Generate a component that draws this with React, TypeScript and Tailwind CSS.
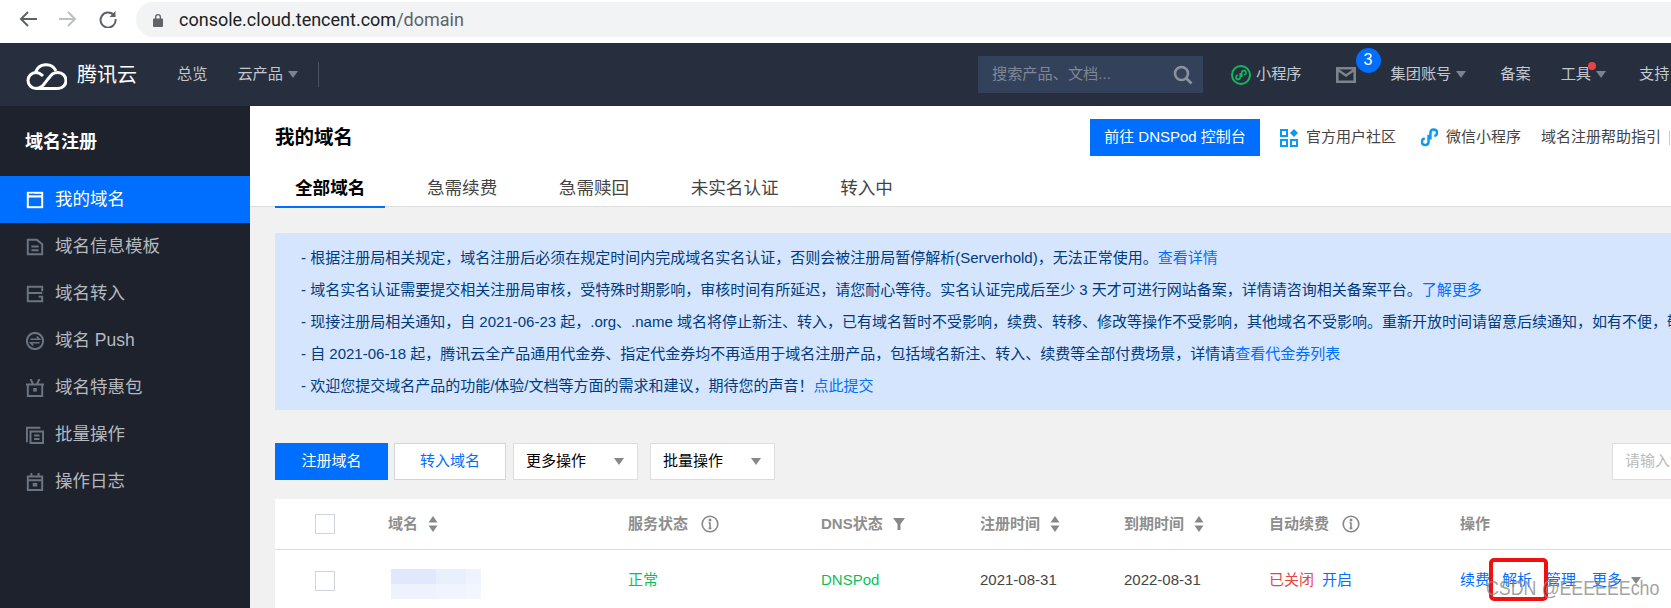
const Caret = ({ className = "border-t-[#8f96a0]" }: { className?: string }) => (
  <span className={`inline-block w-0 h-0 border-x-[5px] border-x-transparent border-t-[7px] ${className}`} />
);

const Sort = () => (
  <svg viewBox="0 0 10 16" className="w-[10px] h-[16px] ml-[10px]" fill="#888">
    <path d="M5 0l4.500 6.500h-9zM5 16l4.500-6.500h-9z" />
  </svg>
);

const Info = () => (
  <svg viewBox="0 0 18 18" className="w-[18px] h-[18px] ml-[13px]" fill="none" stroke="#888" strokeWidth="1.600">
    <circle cx="9" cy="9" r="7.800" />
    <path d="M9 7.500v6M7.600 7.800H9M7.600 13.400h2.800" />
    <circle cx="9" cy="5" r="0.700" fill="#888" />
  </svg>
);

const sideIcons = [
  <>
    <rect x="2" y="2" width="16" height="16" />
    <path d="M2 6h16" strokeWidth="2.500" />
    <path d="M4 3.500h1.500M7 3.500h1.500" stroke="#006eff" strokeWidth="1.200" />
  </>,
  <path d="M2 2h10l6 5v11H2zM6 9.500h8M6 13.500h8" />,
  <path d="M18 7V2H2v16h16v-5h-4M2 9h16" />,
  <>
    <circle cx="10" cy="10" r="9" />
    <path d="M5 8h10l-3-3M15 12H5l3 3" strokeWidth="1.700" />
  </>,
  <>
    <path d="M2 6h16v13H2zM0 6h20M5 0l3 6M15 0l-3 6" />
    <rect x="8" y="10" width="4" height="4" fill="currentColor" stroke="none" />
  </>,
  <path d="M1 18V2h15M5 6h14v13H5zM9 10.500h6M9 14.500h6" />,
  <>
    <path d="M2 4h16v15H2zM6 0v5M14 0v5M2 8h16" />
    <rect x="7.500" y="11" width="5" height="4" fill="currentColor" stroke="none" />
  </>,
];

const sideItems = ["我的域名", "域名信息模板", "域名转入", "域名 Push", "域名特惠包", "批量操作", "操作日志"];

const notices = [
  { text: "- 根据注册局相关规定，域名注册后必须在规定时间内完成域名实名认证，否则会被注册局暂停解析(Serverhold)，无法正常使用。", link: "查看详情" },
  { text: "- 域名实名认证需要提交相关注册局审核，受特殊时期影响，审核时间有所延迟，请您耐心等待。实名认证完成后至少 3 天才可进行网站备案，详情请咨询相关备案平台。", link: "了解更多" },
  { text: "- 现接注册局相关通知，自 2021-06-23 起，.org、.name 域名将停止新注、转入，已有域名暂时不受影响，续费、转移、修改等操作不受影响，其他域名不受影响。重新开放时间请留意后续通知，如有不便，敬请谅解。", link: "" },
  { text: "- 自 2021-06-18 起，腾讯云全产品通用代金券、指定代金券均不再适用于域名注册产品，包括域名新注、转入、续费等全部付费场景，详情请", link: "查看代金券列表" },
  { text: "- 欢迎您提交域名产品的功能/体验/文档等方面的需求和建议，期待您的声音！", link: "点此提交" },
];

const tabs = ["全部域名", "急需续费", "急需赎回", "未实名认证", "转入中"];

export default function App() {
  return (
    <div className="w-[1671px] h-[608px] overflow-hidden relative bg-[#f1f1f1] font-['Liberation_Sans','Noto_Sans_CJK_SC',sans-serif]">
      {/* Browser bar */}
      <div className="h-[43px] bg-white flex items-start">
        <div className="h-[37px] flex items-center shrink-0">
          <svg viewBox="0 0 18 18" className="w-[18px] h-[18px] ml-[19px]" fill="none" stroke="#5f6368" strokeWidth="2">
            <path d="M18 9H2M9 2L2 9l7 7" />
          </svg>
          <svg viewBox="0 0 18 18" className="w-[18px] h-[18px] ml-[22px]" fill="none" stroke="#bcbfc3" strokeWidth="2">
            <path d="M0 9h16M9 2l7 7-7 7" />
          </svg>
          <svg viewBox="0 0 18 18" className="w-[18px] h-[18px] ml-[22px]" fill="none" stroke="#5f6368" strokeWidth="2">
            <path d="M15 5.500A7.500 7.500 0 1016.500 9" />
            <path d="M16.500 1v6h-6z" fill="#5f6368" stroke="none" />
          </svg>
        </div>
        <div className="ml-[19px] mt-[2px] h-[35px] flex-1 rounded-l-full bg-[#f1f3f4] flex items-center pl-[17px]">
          <svg viewBox="0 0 10 14" className="w-[10px] h-[14px]" fill="#5f6368">
            <path d="M1 5.500h1V4a3 3 0 016 0v1.500h1a1 1 0 011 1V13a1 1 0 01-1 1H1a1 1 0 01-1-1V6.500a1 1 0 011-1zM3.300 5.500h3.400V4a1.700 1.700 0 00-3.400 0z" />
          </svg>
          <span className="ml-[16px] text-[18px] leading-none font-['Roboto',sans-serif] text-[#202124]">
            console.cloud.tencent.com<span className="text-[#5f6368]">/domain</span>
          </span>
        </div>
      </div>

      {/* Top nav */}
      <div className="h-[63px] bg-[#272f3e] flex items-center text-[15.200px] text-[#c3c8cf] whitespace-nowrap">
        <svg viewBox="0 0 42 30" className="w-[42px] h-[30px] ml-[25px] shrink-0" fill="none" stroke="white" strokeWidth="3">
          <path d="M11 28.500a8 8 0 110-16c3 0 5 1.500 7 3.500" />
          <path d="M11 28.500C17 28.500 19 24 23 19S28 12.500 33 12.500a8 8 0 010 16H11" />
          <path d="M10.500 12.500A11 11 0 0131 11" />
        </svg>
        <span className="ml-[10px] text-[20px] text-white">腾讯云</span>
        <span className="ml-[40px]">总览</span>
        <span className="ml-[30px]">云产品</span>
        <Caret className="ml-[5px] border-t-[#7d838c]" />
        <div className="ml-[20px] w-px h-[25px] bg-[#4a525f]" />
        <div className="ml-[659px] w-[225px] h-[37px] bg-[#33415a] flex items-center justify-between pl-[14px] pr-[10px] text-[#7f8794]">
          <span>搜索产品、文档...</span>
          <svg viewBox="0 0 20 20" className="w-[20px] h-[20px]" fill="none" stroke="#8a929d" strokeWidth="2.600">
            <circle cx="8.500" cy="8.500" r="6.500" />
            <path d="M13 13l5.500 5.500" />
          </svg>
        </div>
        <svg viewBox="0 0 20 20" className="w-[20px] h-[20px] ml-[28px]" fill="none" stroke="#12b95b" strokeWidth="2">
          <circle cx="10" cy="10" r="9" />
          <path d="M9.200 8v4.300a2.100 2.100 0 11-2.200-2.100M10.800 12V7.700a2.100 2.100 0 112.200 2.100" strokeWidth="1.600" />
        </svg>
        <span className="ml-[5px]">小程序</span>
        <div className="relative ml-[34px] flex">
          <svg viewBox="0 0 20 16" className="w-[20px] h-[16px]" fill="none" stroke="#7d838c" strokeWidth="2.600">
            <path d="M1.300 1.300h17.400v13.400H1.300zM2 3l8 5.500L18 3" />
          </svg>
          <span className="absolute left-[20px] top-[-19px] w-[25px] h-[25px] rounded-full bg-[#006eff] text-white text-[16px] flex items-center justify-center">3</span>
        </div>
        <span className="ml-[35px]">集团账号</span>
        <Caret className="ml-[5px] border-t-[#7d838c]" />
        <span className="ml-[34px]">备案</span>
        <span className="ml-[30px] relative">
          工具
          <span className="absolute right-[-5px] top-[-1px] w-[8px] h-[8px] rounded-full bg-[#e54545]" />
        </span>
        <Caret className="ml-[5px] border-t-[#7d838c]" />
        <span className="ml-[33px]">支持</span>
      </div>

      <div className="flex h-[502px]">
        {/* Sidebar */}
        <aside className="w-[250px] shrink-0 bg-[#1e222d]">
          <div className="h-[70px] flex items-center pl-[25px] pt-[2px] text-[18px] font-bold text-white">域名注册</div>
          {sideItems.map((item, i) => (
            <div
              key={item}
              className={`h-[47px] flex items-center pl-[26px] text-[17.500px] ${i === 0 ? "bg-[#006eff] text-white" : "text-[#b4b9c0]"}`}
            >
              <svg
                viewBox="0 0 20 20"
                className={`w-[18px] h-[18px] mr-[11px] ${i === 0 ? "text-white" : "text-[#6b7480]"}`}
                fill="none"
                stroke="currentColor"
                strokeWidth="2.200"
              >
                {sideIcons[i]}
              </svg>
              {item}
            </div>
          ))}
        </aside>

        {/* Main */}
        <main className="flex-1 min-w-0 overflow-hidden">
          <div className="h-[101px] bg-white border-b border-[#dddddd] relative">
            <div className="flex items-start whitespace-nowrap">
              <h1 className="ml-[25px] mt-[19px] text-[19.500px] leading-[24px] font-bold text-black">我的域名</h1>
              <div className="ml-[737px] mt-[13px] w-[170px] h-[37px] bg-[#006eff] text-white text-[15px] flex items-center justify-center">
                前往 DNSPod 控制台
              </div>
              <div className="ml-[20px] mt-[13px] h-[37px] flex items-center text-[15px] text-[#444]">
                <svg viewBox="0 0 18 18" className="w-[18px] h-[18px] mr-[8px]" fill="#0a9af0">
                  <path fillRule="evenodd" d="M0 0h8v8H0zM2 2v4h4V2zM0 10h8v8H0zM2 12v4h4v-4zM10 10h8v8h-8zM12 12v4h4v-4zM14 0l4 4-4 4-4-4z" />
                </svg>
                官方用户社区
                <svg viewBox="0 0 18 20" className="w-[17px] h-[19px] ml-[25px] mr-[8px]" fill="none" stroke="#0a9af0" strokeWidth="2.600">
                  <path d="M8 7v7.500a3.500 3.500 0 11-4-3.500M10 12V5a3.500 3.500 0 114 3.500" />
                </svg>
                微信小程序
                <span className="ml-[20px]">域名注册帮助指引</span>
                <span className="ml-[8px] w-px h-[14px] bg-[#cccccc]" />
              </div>
            </div>
            <div className="flex ml-[25px] mt-[20px] text-[17.600px] leading-[24px] text-[#444] whitespace-nowrap">
              {tabs.map((t, i) => (
                <div
                  key={t}
                  className={`px-[20px] h-[32px] mr-[21.500px] ${i === 0 ? "font-bold text-black border-b-2 border-[#006eff]" : ""}`}
                >
                  {t}
                </div>
              ))}
            </div>
          </div>

          <div className="ml-[25px] mt-[26px] h-[177px] bg-[#d4e5fd] pt-[9px] pl-[26px] text-[15px] leading-[32px] text-[#003b80] whitespace-nowrap overflow-hidden">
            {notices.map((n) => (
              <div key={n.text}>
                {n.text}
                <span className="text-[#006eff]">{n.link}</span>
              </div>
            ))}
          </div>

          {/* Toolbar */}
          <div className="ml-[25px] mt-[33px] flex text-[15px] whitespace-nowrap">
            <div className="w-[113px] shrink-0 h-[37px] bg-[#006eff] text-white flex items-center justify-center">注册域名</div>
            <div className="ml-[6px] w-[112px] shrink-0 h-[37px] bg-white border border-[#cfd5de] text-[#006eff] flex items-center justify-center">转入域名</div>
            <div className="ml-[7px] w-[125px] shrink-0 h-[37px] bg-white border border-[#dddddd] text-black flex items-center justify-between pl-[12px] pr-[13px]">
              更多操作
              <Caret className="border-t-[#888]" />
            </div>
            <div className="ml-[12px] w-[125px] shrink-0 h-[37px] bg-white border border-[#dddddd] text-black flex items-center justify-between pl-[12px] pr-[13px]">
              批量操作
              <Caret className="border-t-[#888]" />
            </div>
            <div className="ml-[837px] w-[200px] h-[37px] bg-white border border-[#dddddd] text-[#bbb] flex items-center pl-[12px] shrink-0">请输入域名</div>
          </div>

          {/* Table */}
          <div className="ml-[25px] mt-[19px] bg-white text-[15px] whitespace-nowrap">
            <div className="h-[51px] border-b border-[#dddddd] grid grid-cols-[113px_240px_193px_159px_144px_145px_191px_1fr] items-center font-bold text-[#8e8e8e]">
              <div className="pl-[40px]">
                <div className="w-[20px] h-[20px] border border-[#cfd5de]" />
              </div>
              <div className="flex items-center">域名<Sort /></div>
              <div className="flex items-center">服务状态<Info /></div>
              <div className="flex items-center">DNS状态
                <svg viewBox="0 0 12 12" className="w-[12px] h-[12px] ml-[10px]" fill="#888">
                  <path d="M0 0h12L7.500 6v6h-3V6z" />
                </svg>
              </div>
              <div className="flex items-center">注册时间<Sort /></div>
              <div className="flex items-center">到期时间<Sort /></div>
              <div className="flex items-center">自动续费<Info /></div>
              <div>操作</div>
            </div>
            <div className="h-[60px] grid grid-cols-[113px_240px_193px_159px_144px_145px_191px_1fr] items-center text-[#444]">
              <div className="pl-[40px] mt-[2px]">
                <div className="w-[20px] h-[20px] border border-[#cfd5de]" />
              </div>
              <div className="ml-[3px] mt-[8px] w-[90px] h-[30px] grid grid-cols-[45px_30px_15px] grid-rows-2">
                <div className="bg-[#dfe8fd]" />
                <div className="bg-[#e8effd]" />
                <div className="bg-[#eef3fe]" />
                <div className="bg-[#edf2fd]" />
                <div className="bg-[#eff4fe]" />
                <div className="bg-[#f2f6fe]" />
              </div>
              <div className="text-[#0abf5b]">正常</div>
              <div className="text-[#0abf5b]">DNSPod</div>
              <div>2021-08-31</div>
              <div>2022-08-31</div>
              <div>
                <span className="text-[#e54545]">已关闭</span>
                <span className="ml-[8px] text-[#006eff]">开启</span>
              </div>
              <div className="flex items-center text-[#006eff]">
                <span>续费</span>
                <span className="ml-[12px]">解析</span>
                <span className="ml-[14px]">管理</span>
                <span className="ml-[16px]">更多</span>
                <Caret className="ml-[9px] border-t-[#888]" />
              </div>
            </div>
          </div>
        </main>
      </div>

      {/* Red annotation and watermark over the row */}
      <div className="absolute left-[1489px] top-[558px] w-[59px] h-[43px] border-[4px] border-[#f01010] rounded-[5px]" />
      <span className="absolute left-[1486px] top-[576px] text-[20px] leading-[24px] text-[#8a8a8a]/80 scale-x-[0.89] origin-left whitespace-nowrap">CSDN @EEEEEEcho</span>
    </div>
  );
}
